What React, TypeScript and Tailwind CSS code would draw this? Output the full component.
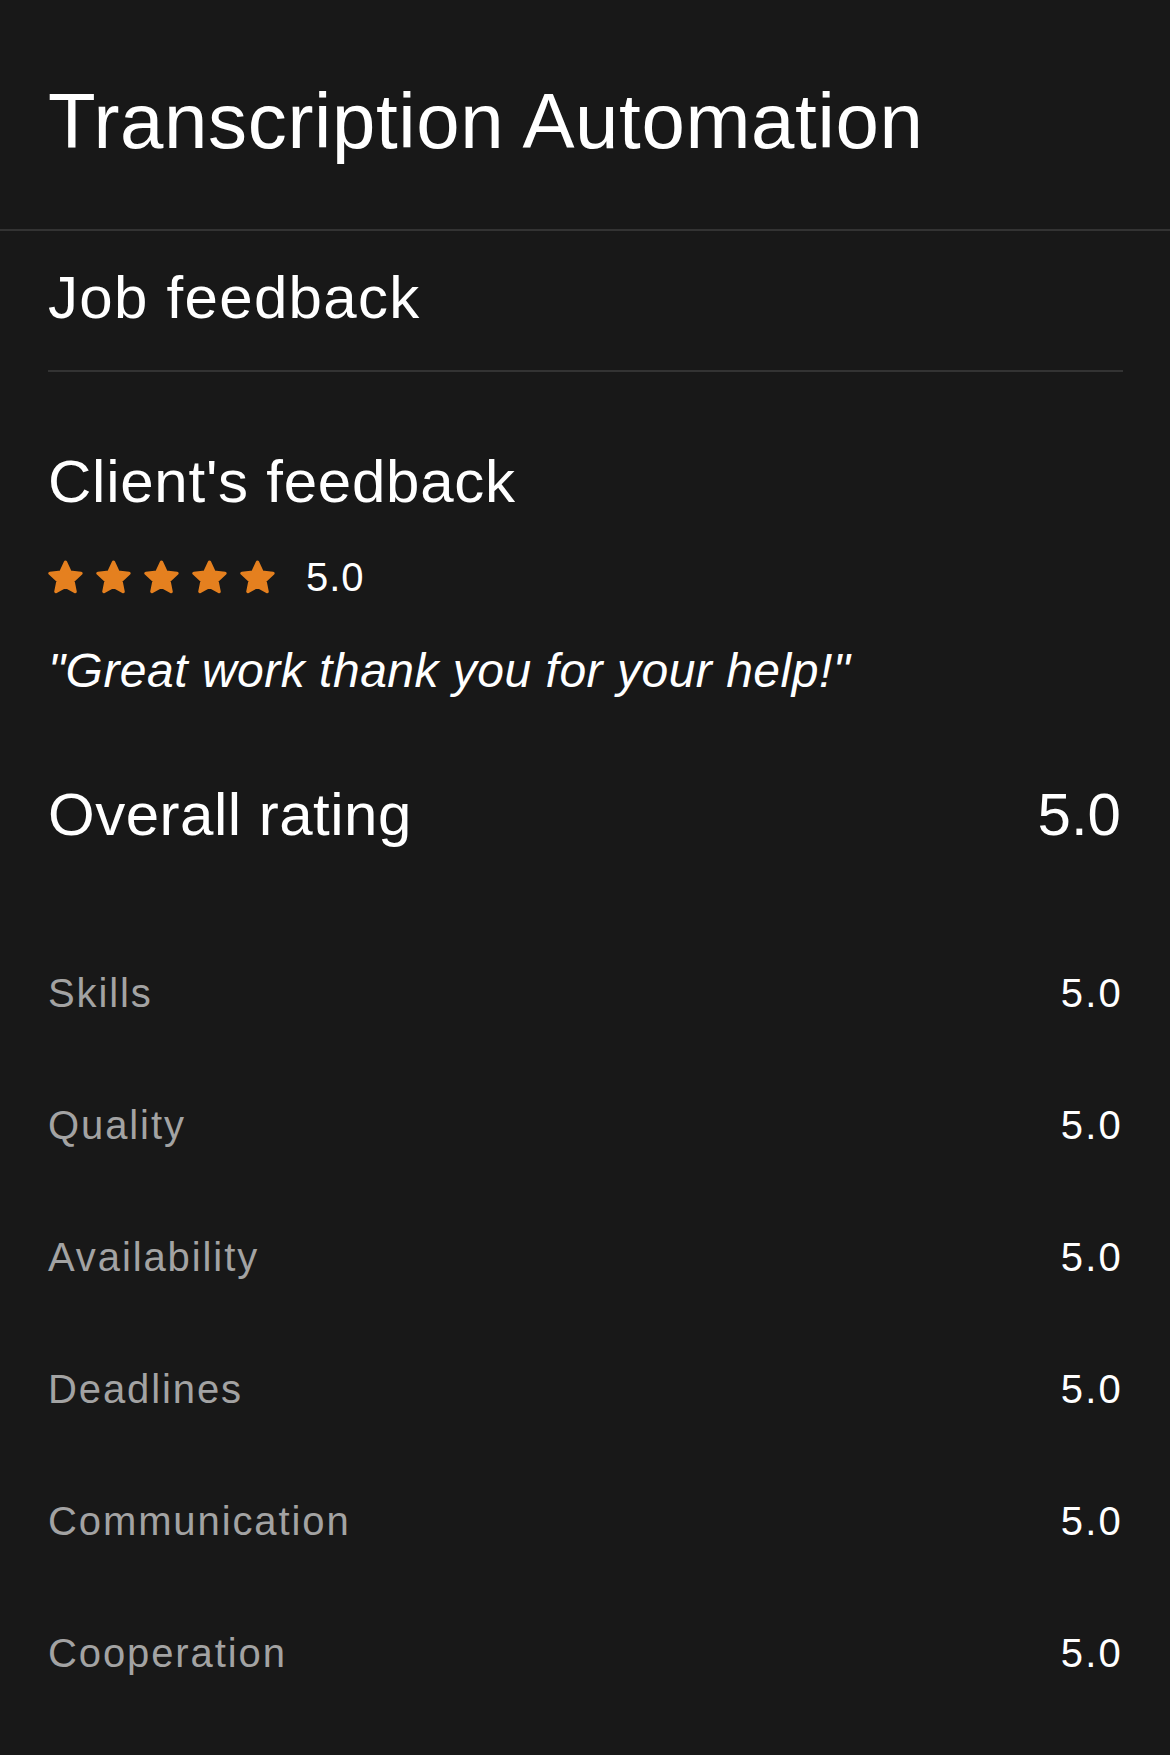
import React from "react";

const ratings: { label: string; value: string }[] = [
  { label: "Skills", value: "5.0" },
  { label: "Quality", value: "5.0" },
  { label: "Availability", value: "5.0" },
  { label: "Deadlines", value: "5.0" },
  { label: "Communication", value: "5.0" },
  { label: "Cooperation", value: "5.0" },
];

const Star: React.FC = () => (
  <svg width="35" height="34" viewBox="1.6 1.6 20.8 20" className="shrink-0">
    <path
      d="M12 2.8l2.75 5.9 6.45.75-4.78 4.4 1.28 6.37L12 17.05l-5.7 3.17 1.28-6.37-4.78-4.4 6.45-.75z"
      fill="#e5801f"
      stroke="#e5801f"
      strokeWidth="2"
      strokeLinejoin="round"
    />
  </svg>
);

const App: React.FC = () => {
  return (
    <div className="min-h-screen bg-[#181818] text-white font-['Liberation_Sans',Arial,sans-serif]">
      <header className="pt-[82px] pb-[69px] pl-[48px]">
        <h1 className="text-[78px] leading-none tracking-[0.65px]">
          Transcription Automation
        </h1>
      </header>
      <div className="h-[2px] bg-[#333333]"></div>

      <main className="pl-[48px] pr-[47px]">
        <h2 className="mt-[37px] text-[60px] leading-none tracking-[1.3px]">
          Job feedback
        </h2>
        <div className="mt-[42px] h-[2px] bg-[#333333]"></div>

        <section>
          <h3 className="mt-[80px] text-[60px] leading-none tracking-[0.75px]">
            Client's feedback
          </h3>
          <div className="mt-[45px] flex h-[40px] items-center">
            <div className="flex items-center gap-[13px]">
              <Star />
              <Star />
              <Star />
              <Star />
              <Star />
            </div>
            <span className="ml-[31px] text-[40px] leading-none tracking-[1px]">
              5.0
            </span>
          </div>
          <p className="mt-[50px] text-[48px] italic leading-none tracking-[0.5px]">
            "Great work thank you for your help!"
          </p>
        </section>

        <section className="mt-[90px]">
          <div className="flex items-center justify-between text-[60px] leading-none">
            <span className="tracking-[0.5px]">Overall rating</span>
            <span className="mr-[2px]">5.0</span>
          </div>
          <ul className="mt-[128px] flex flex-col gap-[92px]">
            {ratings.map((r) => (
              <li
                key={r.label}
                className="flex items-center justify-between text-[40px] leading-none"
              >
                <span className="text-[#a3a3a3] tracking-[1.9px]">{r.label}</span>
                <span className="tracking-[2.2px]">{r.value}</span>
              </li>
            ))}
          </ul>
        </section>
      </main>
    </div>
  );
};

export default App;
